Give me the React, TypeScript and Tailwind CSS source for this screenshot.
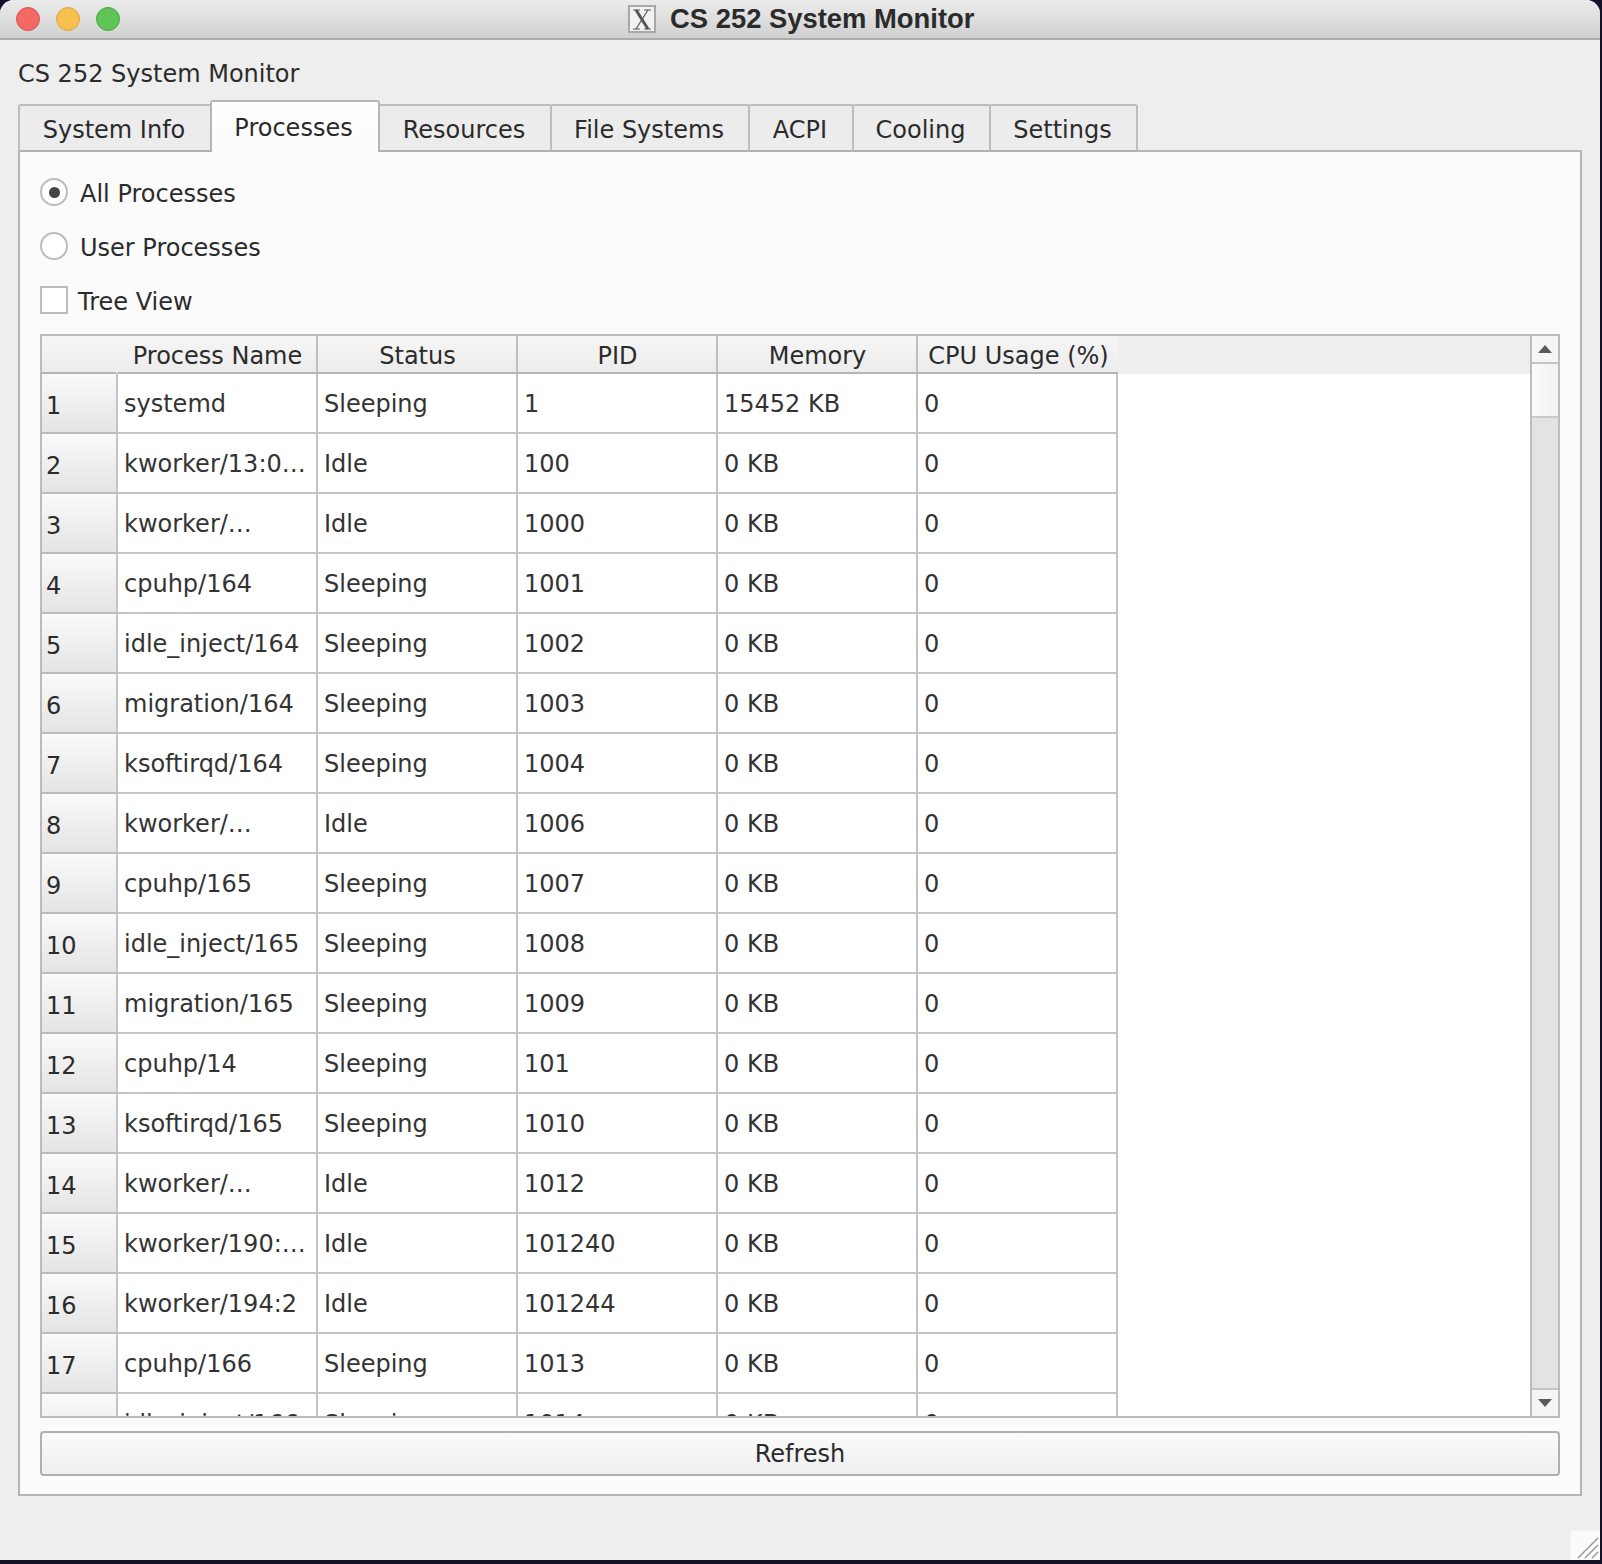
const TABS = [
  { label: 'System Info', width: 'w-[194px]' },
  { label: 'Processes', width: 'w-[170px]' },
  { label: 'Resources', width: 'w-[174px]' },
  { label: 'File Systems', width: 'w-[200px]' },
  { label: 'ACPI', width: 'w-[106px]' },
  { label: 'Cooling', width: 'w-[139px]' },
  { label: 'Settings', width: 'w-[149px]' },
];

const COLUMNS = ['Process Name', 'Status', 'PID', 'Memory', 'CPU Usage (%)'];

const ROWS = [
  ['systemd', 'Sleeping', '1', '15452 KB', '0'],
  ['kworker/13:0…', 'Idle', '100', '0 KB', '0'],
  ['kworker/…', 'Idle', '1000', '0 KB', '0'],
  ['cpuhp/164', 'Sleeping', '1001', '0 KB', '0'],
  ['idle_inject/164', 'Sleeping', '1002', '0 KB', '0'],
  ['migration/164', 'Sleeping', '1003', '0 KB', '0'],
  ['ksoftirqd/164', 'Sleeping', '1004', '0 KB', '0'],
  ['kworker/…', 'Idle', '1006', '0 KB', '0'],
  ['cpuhp/165', 'Sleeping', '1007', '0 KB', '0'],
  ['idle_inject/165', 'Sleeping', '1008', '0 KB', '0'],
  ['migration/165', 'Sleeping', '1009', '0 KB', '0'],
  ['cpuhp/14', 'Sleeping', '101', '0 KB', '0'],
  ['ksoftirqd/165', 'Sleeping', '1010', '0 KB', '0'],
  ['kworker/…', 'Idle', '1012', '0 KB', '0'],
  ['kworker/190:…', 'Idle', '101240', '0 KB', '0'],
  ['kworker/194:2', 'Idle', '101244', '0 KB', '0'],
  ['cpuhp/166', 'Sleeping', '1013', '0 KB', '0'],
  ['idle_inject/166', 'Sleeping', '1014', '0 KB', '0'],
];

function TitleBar() {
  return (
    <div className="relative flex h-[40px] shrink-0 items-center border-b-2 border-[#ababab] bg-gradient-to-b from-[#ececec] to-[#d0d0d0] pl-4">
      <div className="flex gap-4">
        <span className="size-6 rounded-full border border-[#d9534f] bg-[#f26a63]" />
        <span className="size-6 rounded-full border border-[#e0a33c] bg-[#f6bf50]" />
        <span className="size-6 rounded-full border border-[#46a83e] bg-[#5fc454]" />
      </div>
      <div className="absolute left-[628px] top-[5px] flex items-center gap-[14px]">
        <svg width="28" height="28" viewBox="0 0 28 28">
          <rect x="1" y="1" width="26" height="26" fill="#f2f2f2" stroke="#a8a8a8" strokeWidth="2" />
          <path d="M8 5 L20 24" stroke="#555555" strokeWidth="3" />
          <path d="M20 5 L8 24" stroke="#555555" strokeWidth="1.2" />
          <path d="M5 5 H12 M16 5 H23 M5 24 H12 M16 24 H23" stroke="#555555" strokeWidth="1" />
        </svg>
        <span className="font-['Liberation_Sans',sans-serif] text-[27.4px] font-bold text-[#2b2b2b]">
          CS 252 System Monitor
        </span>
      </div>
    </div>
  );
}

function Tabs() {
  return (
    <div className="relative z-10 -mb-[2px] flex h-[52px] items-end">
      {TABS.map((tab) =>
        tab.label === 'Processes' ? (
          <div
            key={tab.label}
            className={`${tab.width} relative z-10 -mr-[2px] flex h-[52px] items-center justify-center rounded-t-[3px] border-x-2 border-t-2 border-[#b5b5b5] bg-gradient-to-b from-[#ffffff] to-[#fbfbfb] pr-[3px] pt-[2px] text-[#2b2b2b]`}
          >
            {tab.label}
          </div>
        ) : (
          <div
            key={tab.label}
            className={`${tab.width} -mr-[2px] flex h-[48px] items-center justify-center rounded-t-[3px] border-x-2 border-t-2 border-b-2 border-[#bdbdbd] border-b-[#b0b0b0] bg-[#ececec] pr-[2px] pt-[4px] text-[#2b2b2b]`}
          >
            {tab.label}
          </div>
        ),
      )}
    </div>
  );
}

function Radio({ checked, label }: { checked?: boolean; label: string }) {
  return (
    <div className="flex h-[27px] items-center gap-3">
      <span className="mb-[3px] flex size-[28px] shrink-0 items-center justify-center rounded-full border-2 border-[#bcbcbc] bg-white">
        {checked && <span className="size-[11px] rounded-full bg-[#444444]" />}
      </span>
      <span>{label}</span>
    </div>
  );
}

function ProcessTable() {
  return (
    <div className="mt-[19px] flex h-[1084px] overflow-hidden border-2 border-[#bcbcbc] bg-white">
      <div className="flex min-w-0 flex-1 flex-col overflow-hidden">
        <div className="flex h-[38px] shrink-0 bg-[#eeeeee]">
          <div className="w-[74px] shrink-0 border-b-2 border-[#b5b5b5] bg-gradient-to-b from-[#f6f6f6] to-[#ececec]" />
          {COLUMNS.map((col, j) => (
            <div
              key={col}
              className={`flex shrink-0 items-center justify-center border-b-2 border-l-2 border-b-[#b5b5b5] bg-gradient-to-b from-[#f6f6f6] to-[#ececec] pl-[1px] pt-[3px] text-[#2b2b2b] ${j === 0 ? 'border-l-transparent' : 'border-l-[#bdbdbd]'} ${j === 4 ? 'w-[202px]' : 'w-[200px]'}`}
            >
              {col}
            </div>
          ))}
        </div>
        {ROWS.map((row, i) => (
          <div key={i} className="flex h-[60px] shrink-0">
            <div className="flex w-[74px] shrink-0 items-end border-b-2 border-[#bdbdbd] bg-gradient-to-b from-[#fafafa] to-[#e4e4e4] pb-[14px] pl-[4px] text-[#2b2b2b]">
              {i + 1}
            </div>
            {row.map((cell, j) => (
              <div
                key={j}
                className={`flex shrink-0 items-center overflow-hidden whitespace-nowrap border-b-2 border-l-2 border-[#c4c4c4] pl-[6px] pt-[1px] text-[#333333] ${j === 4 ? 'w-[202px] border-r-2' : 'w-[200px]'}`}
              >
                {cell}
              </div>
            ))}
          </div>
        ))}
      </div>
      <div className="flex w-[28px] shrink-0 flex-col border-l-2 border-[#bcbcbc]">
        <div className="flex h-[28px] shrink-0 items-center justify-center border-b-2 border-[#c4c4c4] bg-[#f5f5f5]">
          <svg width="14" height="8" viewBox="0 0 14 8">
            <path d="M7 0 L14 8 H0 Z" fill="#5a5a5a" />
          </svg>
        </div>
        <div className="h-[54px] shrink-0 border-b-2 border-[#cacaca] bg-gradient-to-r from-[#fbfbfb] to-[#f2f2f2]" />
        <div className="flex-1 bg-[#e3e3e3]" />
        <div className="flex h-[28px] shrink-0 items-center justify-center border-t-2 border-[#c4c4c4] bg-[#f5f5f5]">
          <svg width="14" height="8" viewBox="0 0 14 8">
            <path d="M0 0 H14 L7 8 Z" fill="#5a5a5a" />
          </svg>
        </div>
      </div>
    </div>
  );
}

export default function App() {
  return (
    <div className="h-[1564px] w-[1602px] overflow-hidden bg-[#14102a] font-['DejaVu_Sans',sans-serif] text-[24px] leading-none">
      <div className="relative flex h-[1560px] w-[1600px] flex-col overflow-hidden rounded-t-[14px] bg-[#eeeeee]">
        <TitleBar />
        <div className="pl-[18px] pr-[18px]">
          <div className="flex h-[60px] items-center pt-[7px] text-[#2b2b2b]">CS 252 System Monitor</div>
          <Tabs />
          <div className="h-[1346px] border-2 border-[#b5b5b5] bg-[#fbfbfb] px-5 pt-[28px] text-[#2b2b2b]">
            <div className="flex flex-col gap-[27px]">
              <Radio checked label="All Processes" />
              <Radio label="User Processes" />
              <div className="flex h-[27px] items-center gap-[10px]">
                <span className="mb-[3px] size-[28px] shrink-0 border-2 border-[#bcbcbc] bg-white" />
                <span>Tree View</span>
              </div>
            </div>
            <ProcessTable />
            <button className="mt-[13px] flex h-[45px] w-full items-center justify-center rounded-[4px] border-2 border-[#b0b0b0] bg-gradient-to-b from-[#fbfbfb] to-[#eeeeee] text-[#2b2b2b]">
              Refresh
            </button>
          </div>
        </div>
        <div className="absolute bottom-0 right-0 flex size-[30px] items-end justify-end border-l border-t border-[#f4f4f4] bg-[#fafafa]">
          <svg width="24" height="24" viewBox="0 0 24 24">
            <path d="M2 22 L22 2 M9 22 L22 9 M16 22 L22 16" stroke="#9a9a9a" strokeWidth="1.5" />
          </svg>
        </div>
      </div>
    </div>
  );
}
